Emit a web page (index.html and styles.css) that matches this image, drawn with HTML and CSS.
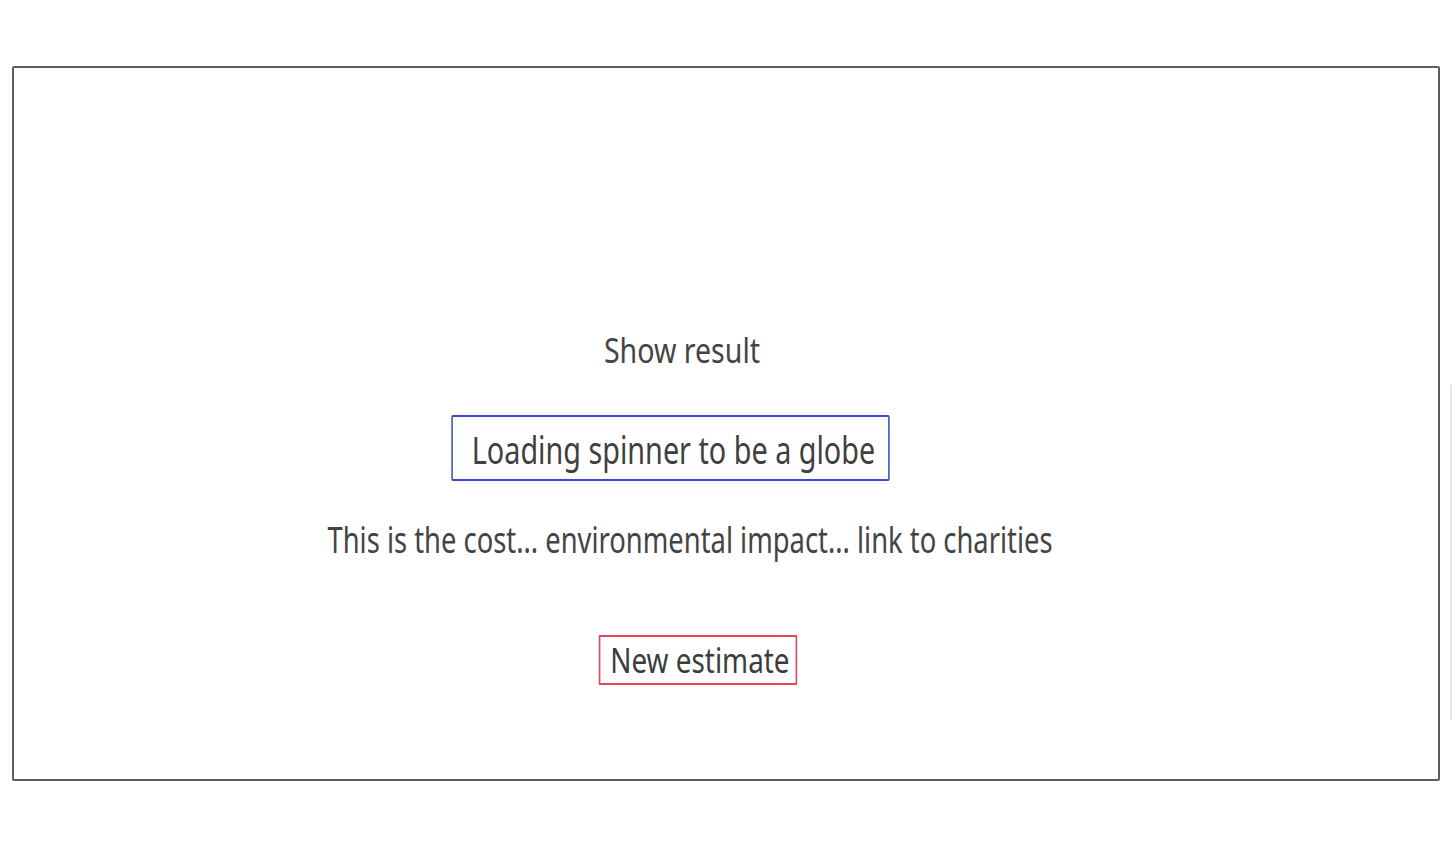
FILE: index.html
```html
<!DOCTYPE html>
<html lang="en">
<head>
<meta charset="utf-8">
<title>Result</title>
<link rel="stylesheet" href="styles.css">
</head>
<body>
<div class="page">
  <main class="frame">
    <p class="show-result">Show result</p>
    <div class="spinner-box">Loading spinner to be a globe</div>
    <p class="impact">This is the cost... environmental impact... link to charities</p>
    <button class="new-estimate" type="button">New estimate</button>
  </main>
  <div class="edge-line"></div>
</div>
</body>
</html>
```
FILE: styles.css
```css
html, body {
  margin: 0;
  padding: 0;
  background: #ffffff;
}

body {
  font-family: "Noto Sans", "DejaVu Sans", sans-serif;
  color: #444444;
}

.page {
  display: flex;
  align-items: flex-start;
  width: 1453px;
  height: 862px;
}

.frame {
  box-sizing: border-box;
  margin: 66px 0 0 12px;
  width: 1428px;
  height: 715px;
  border: 2px solid #5e5e5e;
  border-radius: 2px;
  padding: 262px 56px 0 0;
  display: flex;
  flex-direction: column;
  align-items: center;
}

/* the reference face is a narrow rounded sans; emulate its width */
.show-result,
.spinner-box,
.impact,
.new-estimate {
  transform-origin: center center;
  white-space: nowrap;
}

.show-result {
  margin: 0 32px 0 0;
  font-size: 34px;
  line-height: 40px;
  transform: scaleX(0.84);
}

.spinner-box {
  margin: 45px 55px 0 0;
  border: 2px solid #3a4ccc;
  border-radius: 2px;
  padding: 10px 17px 8px 25px;
  font-size: 38px;
  line-height: 44px;
  color: #404040;
  transform: scaleX(0.757);
}

.impact {
  margin: 38px 16px 0 0;
  font-size: 36px;
  line-height: 42px;
  transform: scaleX(0.76);
}

.new-estimate {
  margin: 74px 0 0 0;
  background: #ffffff;
  border: 2px solid #e2475e;
  border-radius: 1px;
  padding: 2px 7px 2px 12px;
  font-family: inherit;
  font-size: 34px;
  line-height: 42px;
  color: #3c3c3c;
  transform: scaleX(0.82);
}

.edge-line {
  margin: 385px 0 0 10px;
  width: 2px;
  height: 335px;
  background: #e6e6e6;
}
```
